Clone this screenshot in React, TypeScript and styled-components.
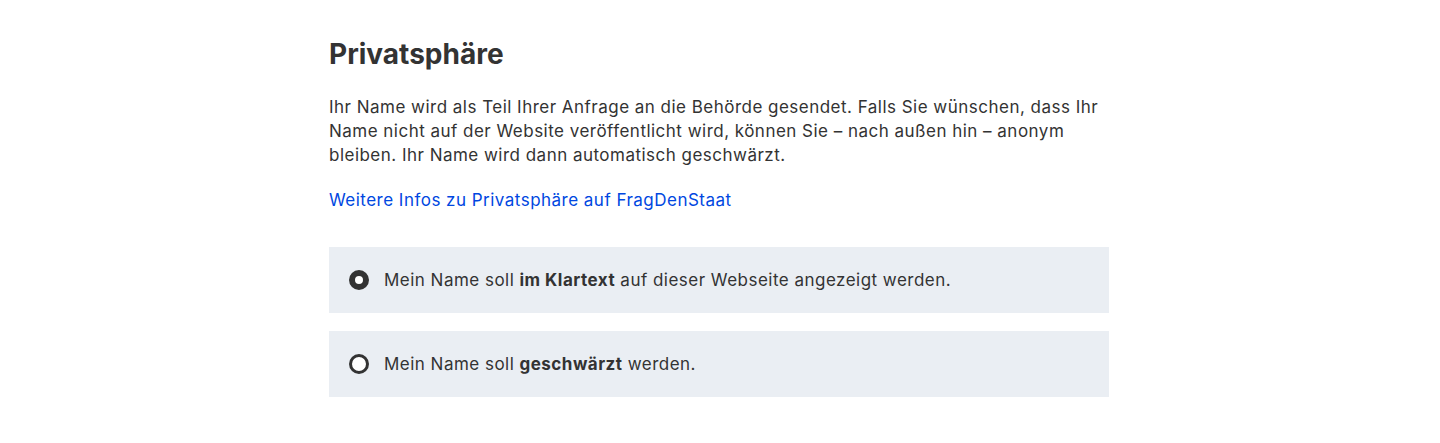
import React, { useState } from "react";
import styled, { createGlobalStyle } from "styled-components";

const Global = createGlobalStyle`
  html, body { margin: 0; padding: 0; background: #fff; }
  body { font-family: Inter, "Noto Sans", sans-serif; color: #333; -webkit-font-smoothing: antialiased; }
  * { box-sizing: border-box; }
`;

const Page = styled.main`
  width: 782px;
  margin: 0 auto;
  padding: 37px 2px 0 0;
`;

const Title = styled.h2`
  margin: 0 0 24px;
  font-size: 28px;
  line-height: 34px;
  font-weight: 700;
  color: #333;
`;

const Text = styled.p`
  margin: 0 0 21px;
  font-size: 17px;
  line-height: 24px;
  letter-spacing: 0.48px;
`;

const Link = styled.a`
  color: #0047e1;
  text-decoration: none;
`;

const Options = styled.div`
  display: flex;
  flex-direction: column;
  gap: 18px;
  margin-top: 35px;
`;

const Option = styled.label`
  display: flex;
  align-items: center;
  gap: 15px;
  height: 66px;
  padding: 0 20px;
  background: #eaeef3;
  font-size: 17px;
  line-height: 24px;
  letter-spacing: 0.48px;
  cursor: pointer;
`;

const Radio = styled.span<{ $checked: boolean }>`
  flex: none;
  width: 20px;
  height: 20px;
  border-radius: 50%;
  background: #fff;
  border: ${(p) => (p.$checked ? "6.5px solid #333" : "3px solid #333")};
`;

export default function App() {
  const [val, setVal] = useState("klar");
  return (
    <>
      <Global />
      <Page>
        <Title>Privatsphäre</Title>
        <Text>
          Ihr Name wird als Teil Ihrer Anfrage an die Behörde gesendet. Falls Sie wünschen, dass Ihr
          Name nicht auf der Website veröffentlicht wird, können Sie – nach außen hin – anonym
          bleiben. Ihr Name wird dann automatisch geschwärzt.
        </Text>
        <Text>
          <Link href="#">Weitere Infos zu Privatsphäre auf FragDenStaat</Link>
        </Text>
        <Options>
          <Option onClick={() => setVal("klar")}>
            <Radio $checked={val === "klar"} />
            <span>
              Mein Name soll <b>im Klartext</b> auf dieser Webseite angezeigt werden.
            </span>
          </Option>
          <Option onClick={() => setVal("anon")}>
            <Radio $checked={val === "anon"} />
            <span>
              Mein Name soll <b>geschwärzt</b> werden.
            </span>
          </Option>
        </Options>
      </Page>
    </>
  );
}
